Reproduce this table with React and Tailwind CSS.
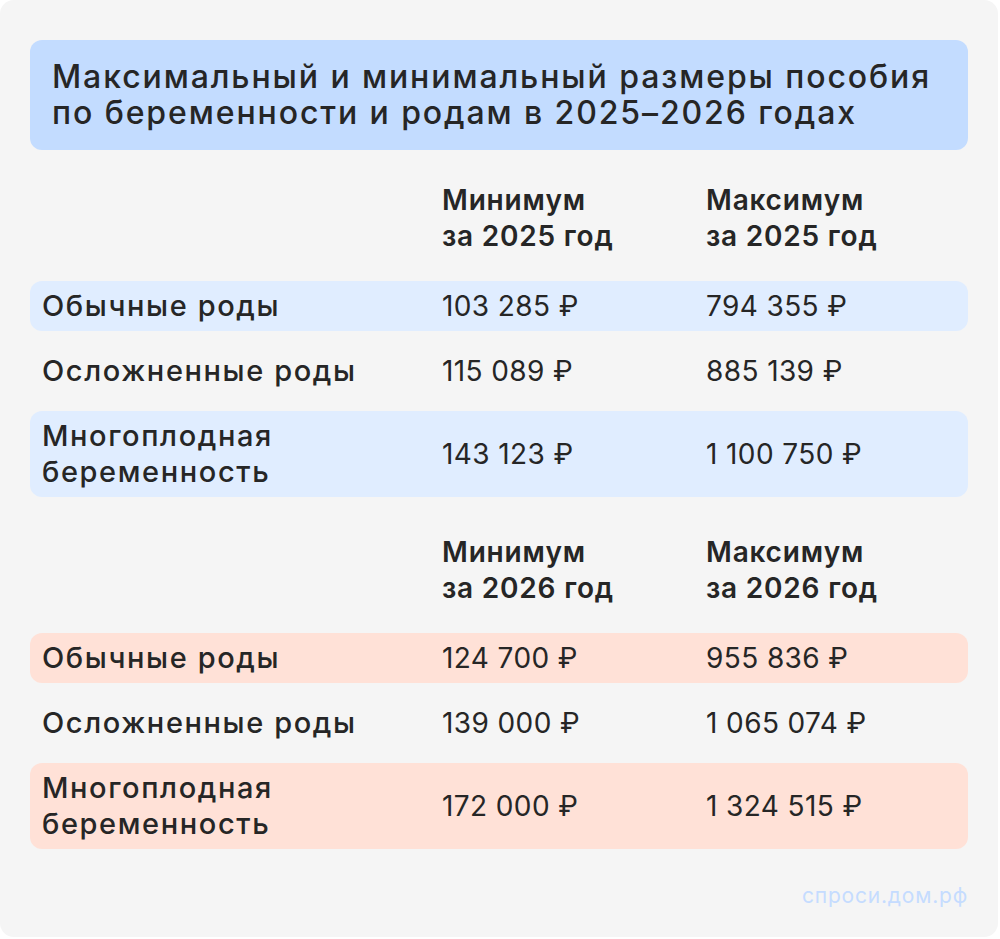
const font = { fontFamily: "Inter, 'Noto Sans', sans-serif" }

const y2025 = [
  { label: ["Обычные роды"], min: "103 285 ₽", max: "794 355 ₽", fill: true },
  { label: ["Осложненные роды"], min: "115 089 ₽", max: "885 139 ₽" },
  { label: ["Многоплодная", "беременность"], min: "143 123 ₽", max: "1 100 750 ₽", fill: true },
]

const y2026 = [
  { label: ["Обычные роды"], min: "124 700 ₽", max: "955 836 ₽", fill: true },
  { label: ["Осложненные роды"], min: "139 000 ₽", max: "1 065 074 ₽" },
  { label: ["Многоплодная", "беременность"], min: "172 000 ₽", max: "1 324 515 ₽", fill: true },
]

function Head({ year }) {
  return (
    <div className="grid grid-cols-[400px_264px_1fr] px-3 text-[28px] leading-[36px] font-semibold tracking-[0.8px] text-[#262626]">
      <div />
      <div>Минимум<br />за {year} год</div>
      <div>Максимум<br />за {year} год</div>
    </div>
  )
}

function Row({ row, tint }) {
  const tall = row.label.length > 1
  const bg = row.fill ? tint : ""
  return (
    <div className={`grid grid-cols-[400px_264px_1fr] items-center px-3 rounded-xl text-[28px] leading-[36px] text-[#262626] ${tall ? "h-[86px]" : "h-[50px]"} ${bg}`}>
      <div className="font-medium text-[29px] tracking-[1.6px]">
        {row.label.map((l, i) => <div key={i}>{l}</div>)}
      </div>
      <div className="tracking-[0.4px]">{row.min}</div>
      <div className="tracking-[0.4px]">{row.max}</div>
    </div>
  )
}

export default function App() {
  return (
    <div className="w-[1000px] h-[939px] bg-white" style={font}>
      <div className="w-[998px] h-[937px] bg-[#f5f5f5] rounded-[14px] px-[30px] pt-10 flex flex-col">
        <div className="bg-[#c3dcff] rounded-xl px-[22px] pt-[19px] h-[110px] text-[32px] leading-[36px] font-medium text-[#262626] tracking-[1.9px]">
          Максимальный и минимальный размеры пособия<br />
          по беременности и родам в 2025–2026 годах
        </div>

        <div className="mt-[32px]">
          <Head year="2025" />
        </div>
        <div className="mt-[27px] flex flex-col gap-[15px]">
          {y2025.map((r, i) => <Row key={i} row={r} tint="bg-[#e0edff]" />)}
        </div>

        <div className="mt-[37px]">
          <Head year="2026" />
        </div>
        <div className="mt-[27px] flex flex-col gap-[15px]">
          {y2026.map((r, i) => <Row key={i} row={r} tint="bg-[#ffe1d7]" />)}
        </div>

        <div className="mt-auto mb-[26px] text-right text-[21px] tracking-[0.8px] text-[#c5dcff]">спроси.дом.рф</div>
      </div>
    </div>
  )
}
